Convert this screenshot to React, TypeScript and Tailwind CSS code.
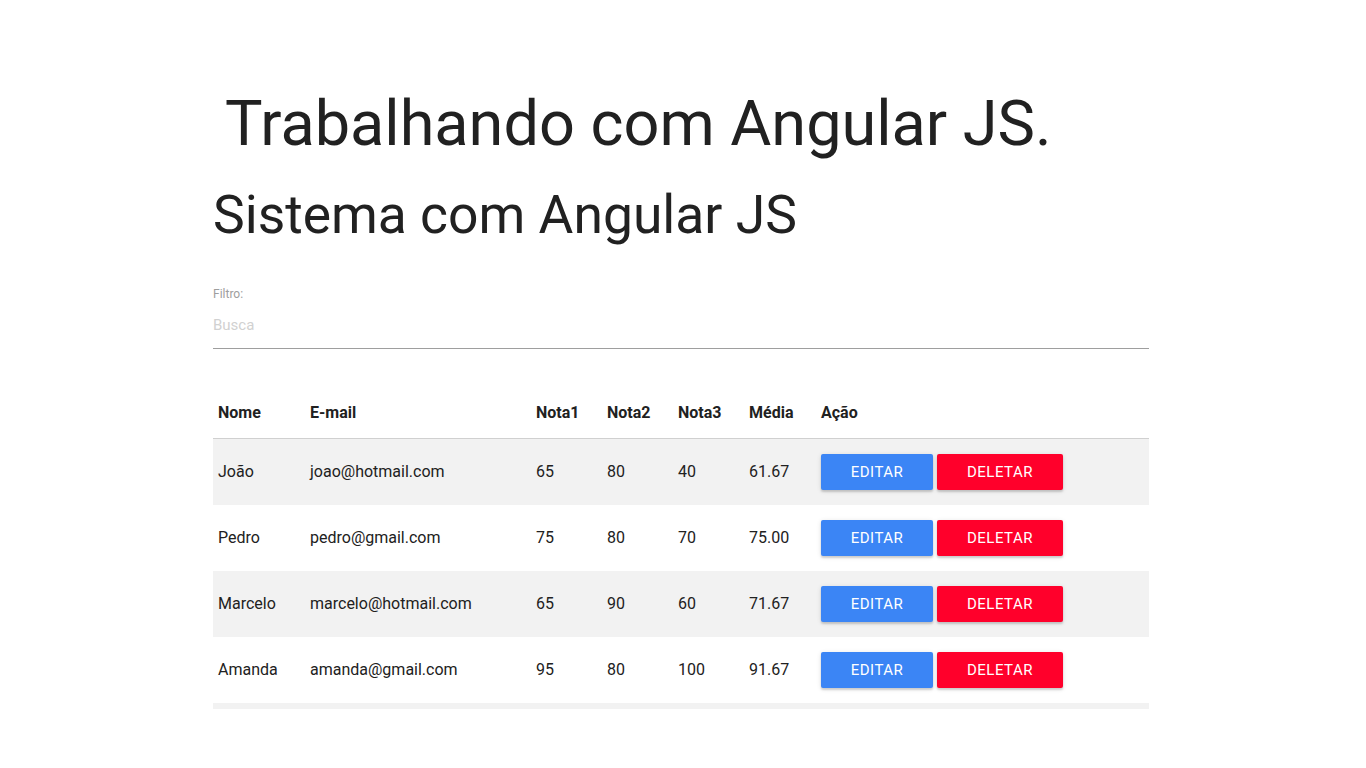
import React from 'react'

type Aluno = {
    nome: string
    email: string
    n1: number
    n2: number
    n3: number
}

const alunos: Aluno[] = [
    { nome: 'João', email: 'joao@hotmail.com', n1: 65, n2: 80, n3: 40 },
    { nome: 'Pedro', email: 'pedro@gmail.com', n1: 75, n2: 80, n3: 70 },
    { nome: 'Marcelo', email: 'marcelo@hotmail.com', n1: 65, n2: 90, n3: 60 },
    { nome: 'Amanda', email: 'amanda@gmail.com', n1: 95, n2: 80, n3: 100 },
]

const cols = 'grid grid-cols-[92px_226px_71px_71px_71px_72px_1fr]'

function App() {
    return (
        <div className="bg-white text-[#212121] font-['Roboto',sans-serif] text-[16px]">
            <div className="ml-[213px] w-[936px] pb-[40px]">
                {/* Titles */}
                <h1 className="pt-[89px] pl-[12px] text-[63px] leading-[70px] font-normal">Trabalhando com Angular JS.</h1>
                <h2 className="mt-[26px] text-[53.4px] leading-[60px] font-normal">Sistema com Angular JS</h2>

                {/* Filtro */}
                <div className="mt-[40px]">
                    <label className="block pt-[1px] text-[12px] leading-[16px] text-[#9e9e9e]">Filtro:</label>
                    <input
                        type="text"
                        placeholder="Busca"
                        className="mt-[2px] block w-full h-[45px] pb-[2px] border-b border-[#9e9e9e] text-[15px] outline-none placeholder:text-[#d1d1d1]"
                    />
                </div>

                {/* Tabela */}
                <div className="mt-[37px]">
                    <div className={cols + ' h-[53px] pt-[2px] items-center border-b border-[#d0d0d0] font-bold'}>
                        <div className="px-[5px]">Nome</div>
                        <div className="px-[5px]">E-mail</div>
                        <div className="px-[5px]">Nota1</div>
                        <div className="px-[5px]">Nota2</div>
                        <div className="px-[5px]">Nota3</div>
                        <div className="px-[5px]">Média</div>
                        <div className="px-[5px]">Ação</div>
                    </div>
                    {alunos.map((a, i) => (
                        <div key={a.nome} className={cols + ' h-[66px] items-center ' + (i % 2 === 0 ? 'bg-[#f2f2f2]' : 'bg-white')}>
                            <div className="px-[5px]">{a.nome}</div>
                            <div className="px-[5px]">{a.email}</div>
                            <div className="px-[5px]">{a.n1}</div>
                            <div className="px-[5px]">{a.n2}</div>
                            <div className="px-[5px]">{a.n3}</div>
                            <div className="px-[5px]">{((a.n1 + a.n2 + a.n3) / 3).toFixed(2)}</div>
                            <div className="px-[5px] flex gap-[4px]">
                                <button className="w-[112px] h-[36px] rounded-[2px] bg-[#3b85f5] text-white text-[15px] tracking-[0.5px] shadow-[0_2px_2px_rgba(0,0,0,0.14),0_1px_5px_rgba(0,0,0,0.12)]">
                                    EDITAR
                                </button>
                                <button className="w-[126px] h-[36px] rounded-[2px] bg-[#ff002b] text-white text-[15px] tracking-[0.5px] shadow-[0_2px_2px_rgba(0,0,0,0.14),0_1px_5px_rgba(0,0,0,0.12)]">
                                    DELETAR
                                </button>
                            </div>
                        </div>
                    ))}
                    <div className="h-[6px] bg-[#f2f2f2]"></div>
                </div>
            </div>
        </div>
    )
}

export default App
